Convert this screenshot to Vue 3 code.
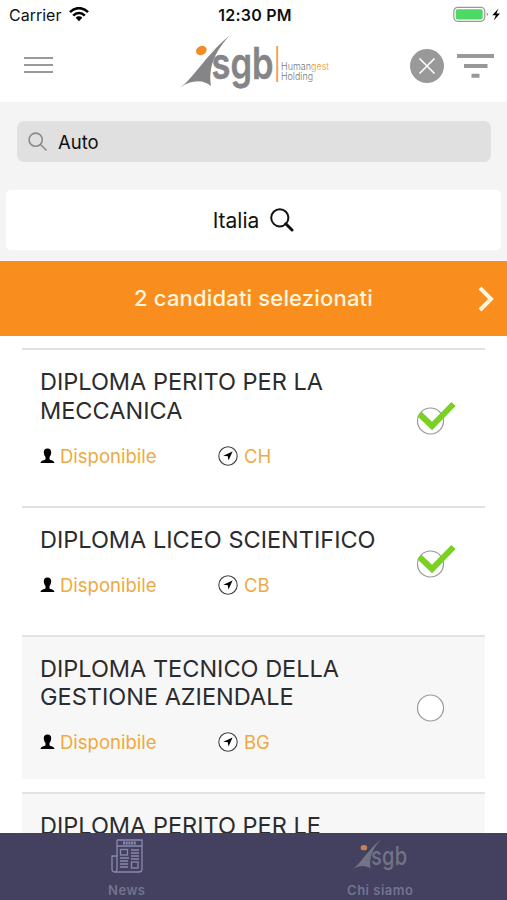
<script setup>
const candidates = [
  { lines: ['DIPLOMA PERITO PER LA', 'MECCANICA'], place: 'CH', selected: true },
  { lines: ['DIPLOMA LICEO SCIENTIFICO'], place: 'CB', selected: true },
  { lines: ['DIPLOMA TECNICO DELLA', 'GESTIONE AZIENDALE'], place: 'BG', selected: false },
  { lines: ['DIPLOMA PERITO PER LE'], place: '', selected: false },
]
</script>

<template>
  <div class="screen">
    <div class="status">
      <div class="carrier">
        <span>Carrier</span>
        <svg width="20" height="15" viewBox="0 0 20 15">
          <g fill="none" stroke="#000" stroke-width="2.6">
            <path d="M1 5.2C6-.2 14-.2 19 5.2" />
            <path d="M4.2 8.6C7.600 5.200 12.400 5.200 15.800 8.600" />
          </g>
          <path d="M6.700 10.700C8.500 8.900 11.500 8.900 13.300 10.700L10 14.200Z" fill="#000" />
        </svg>
      </div>
      <span class="time">12:30 PM</span>
      <svg class="battery" width="48" height="17" viewBox="0 0 48 17">
        <rect x=".8" y="1.300" width="31" height="14" rx="4" fill="#fff" stroke="#999" stroke-width="1.200" />
        <rect x="2.700" y="3.200" width="27" height="10.300" rx="2" fill="#4cd964" />
        <path d="M33.800 6.300q2.400 2 0 4z" fill="#888" />
        <path d="M45.500 2.500L39.300 9.300H42.800L40.800 14.500L47 7.500H43.400Z" fill="#000" />
      </svg>
    </div>

    <header class="header">
      <svg class="menu" width="30" height="18" viewBox="0 0 30 18" stroke="#999" stroke-width="2">
        <path d="M0 2H29M0 9H29M0 16H29" />
      </svg>
      <svg class="logo" width="152" height="56" viewBox="0 0 152 56">
        <path d="M0 51.500C14 42 25 20 49 0C37 14 28 28 31 50C23 43 11 44 0 51.500Z" fill="#858587" />
        <ellipse cx="21.300" cy="14.500" rx="5.500" ry="4.500" transform="rotate(-25 21.300 14.500)" fill="#f28c28" />
        <text x="31.500" y="43" font-size="44" font-weight="600" fill="#858587" stroke="#858587" stroke-width=".5" textLength="62" lengthAdjust="spacingAndGlyphs">sgb</text>
        <path d="M97.200 10V46" stroke="#f4a45a" stroke-width="2" />
        <text x="101" y="33.500" font-size="10.500" font-weight="300" fill="#777" textLength="48" lengthAdjust="spacingAndGlyphs">Human<tspan fill="#f5963c">gest</tspan></text>
        <text x="101" y="43.500" font-size="10.500" font-weight="300" fill="#777" textLength="32" lengthAdjust="spacingAndGlyphs">Holding</text>
      </svg>
      <div class="actions">
        <svg width="34" height="34" viewBox="0 0 34 34">
          <circle cx="17" cy="17" r="17" fill="#999" />
          <path d="M9.500 9.500L24.500 24.500M24.500 9.500L9.500 24.500" stroke="#fff" stroke-width="1.600" />
        </svg>
        <svg width="37" height="26" viewBox="0 0 37 26" stroke="#999" stroke-width="4">
          <path d="M0 3H37M7 13H30.500M14.500 22.800H22.500" />
        </svg>
      </div>
    </header>

    <section class="filters">
      <div class="search">
        <svg width="20" height="20" viewBox="0 0 20 20" fill="none" stroke="#8b8b8b" stroke-width="1.600">
          <circle cx="7.700" cy="7.700" r="6.600" />
          <path d="M12.500 12.500L18.500 18.500" />
        </svg>
        <span>Auto</span>
      </div>
      <div class="region">
        <span>Italia</span>
        <svg width="24" height="24" viewBox="0 0 24 24" fill="none" stroke="#111">
          <circle cx="9.800" cy="9.800" r="8.600" stroke-width="2" />
          <path d="M15.800 15.800L22 22" stroke-width="3" stroke-linecap="round" />
        </svg>
      </div>
    </section>

    <div class="banner">
      <span>2 candidati selezionati</span>
      <svg class="chevron" width="18" height="28" viewBox="0 0 18 28">
        <path d="M3 3L14 14L3 25" fill="none" stroke="#fff6df" stroke-width="4" />
      </svg>
    </div>

    <main class="list">
      <article v-for="c in candidates" :key="c.lines[0]" class="card" :class="{ idle: !c.selected }">
        <div class="info">
          <h2><span v-for="l in c.lines" :key="l">{{ l }}</span></h2>
          <div v-if="c.place" class="meta">
            <div class="availability">
              <svg width="15" height="16" viewBox="0 0 15 16">
                <path d="M7.500.5C10.300.5 11.400 2.200 11.200 4.500C11 7 10.300 8 9.500 9V11.200C10.500 12.400 14.300 12.200 14.500 15H.5C.7 12.200 4.500 12.400 5.500 11.200V9C4.700 8 4 7 3.800 4.500C3.600 2.200 4.700.5 7.500.5Z" />
              </svg>
              <span>Disponibile</span>
            </div>
            <div class="place">
              <svg width="20" height="20" viewBox="0 0 20 20">
                <circle cx="10" cy="10" r="9.200" fill="#fff" stroke="#444" stroke-width="1.100" />
                <path d="M14.600 5.500L10.500 14.500L9.800 10.200L5.300 9.700Z" />
              </svg>
              <span>{{ c.place }}</span>
            </div>
          </div>
        </div>
        <svg v-if="c.place" class="check" width="42" height="60" viewBox="0 0 42 60">
          <circle cx="14.500" cy="30" r="13" fill="#fff" stroke="#999" stroke-width="1.200" />
          <path v-if="c.selected" d="M3.500 23L16 35L37.500 13" fill="none" stroke="#7bd123" stroke-width="6" />
        </svg>
      </article>
    </main>

    <nav class="tabs">
      <div class="tab">
        <svg width="32" height="34" viewBox="0 0 32 34" fill="none" stroke="#8a89ad" stroke-width="1.300">
          <path d="M6 1H31V30Q31 33 28 33H4Q1 33 1 30V17H6V29Q6 33 3.500 33" />
          <path d="M6 1V17M6 7H31M9 19H18M9 22H17M9 25H17M9 28H17M20 11H28M20 14H28M20 17H28M20 20H28" />
          <path d="M12 4H25" stroke-width="3" stroke-dasharray="2 .7" />
          <rect x="9.500" y="10.500" width="7" height="5.500" />
          <rect x="20.500" y="23" width="6.500" height="6" />
        </svg>
        <span>News</span>
      </div>
      <div class="tab">
        <svg width="56" height="34" viewBox="0 0 94 57">
          <path d="M0 51.500C14 42 25 20 49 0C37 14 28 28 31 50C23 43 11 44 0 51.500Z" fill="#737386" />
          <ellipse cx="20" cy="14.500" rx="5.500" ry="4.500" fill="#c08455" />
          <text x="32" y="43" font-size="43" font-weight="500" fill="#737386" textLength="61" lengthAdjust="spacingAndGlyphs">sgb</text>
        </svg>
        <span>Chi siamo</span>
      </div>
    </nav>
  </div>
</template>

<style>
body { margin: 0; background: #fff; }
</style>

<style scoped>
.screen {
  display: flex;
  flex-direction: column;
  height: 900px;
  overflow: hidden;
  background: #fff;
  color: #111;
  font-family: Inter, "Liberation Sans", sans-serif;
}
svg { display: block; flex: none; }
.status {
  display: grid;
  grid-template-columns: 1fr auto 1fr;
  align-items: center;
  height: 29px;
  padding: 0 6px 0 9px;
  font-size: 16px;
}
.carrier { display: flex; align-items: center; gap: 8px; }
.time { font-weight: 600; font-size: 16px; letter-spacing: .25px; }
.battery { justify-self: end; }
.header {
  display: grid;
  grid-template-columns: 156px 152px 1fr;
  align-items: center;
  height: 73px;
  padding: 0 13px 0 24px;
}
.menu { margin-top: -2px; }
.logo { margin-top: -4px; }
.actions { display: flex; align-items: center; justify-content: flex-end; gap: 13px; }
.filters {
  display: flex;
  flex-direction: column;
  gap: 28px;
  flex: none;
  height: 140px;
  padding: 19px 6px 0;
  background: #f4f4f4;
}
.search {
  display: flex;
  align-items: center;
  gap: 10px;
  height: 41px;
  margin: 0 10px 0 11px;
  padding-left: 11px;
  box-sizing: border-box;
  border-radius: 7px;
  background: #e0e0e0;
  font-size: 18.500px;
}
.search span { padding-top: 1px; }
.region {
  display: flex;
  align-items: center;
  justify-content: center;
  gap: 11px;
  height: 60px;
  border-radius: 5px;
  background: #fff;
  font-size: 21px;
}
.region span { padding-top: 1px; }
.banner {
  display: grid;
  grid-template-columns: 1fr auto 1fr;
  align-items: center;
  flex: none;
  height: 75px;
  background: #f98e1e;
  color: #fff6df;
  font-size: 22px;
  font-weight: 500;
  letter-spacing: .17px;
}
.banner span { grid-column: 2; padding-bottom: 2px; }
.chevron { justify-self: end; margin-right: 12px; }
.list {
  flex: 1;
  min-height: 0;
  overflow: hidden;
  padding: 12px 22px 0;
}
.card {
  display: flex;
  align-items: center;
  justify-content: space-between;
  box-sizing: border-box;
  margin-bottom: 13.500px;
  padding: 18px 27px 24.500px 18px;
  border-top: 2px solid #e2e2e2;
}
.card.idle { background: #f7f7f7; }
h2 {
  margin: 0 0 18.500px;
  color: #2c2c2e;
  font-size: 23.500px;
  font-weight: 400;
  line-height: 28.600px;
}
h2 span { display: block; white-space: nowrap; }
.meta { display: flex; height: 24px; color: #efa93f; font-size: 18.500px; line-height: 24px; }
.availability, .place { display: flex; align-items: center; gap: 5px; }
.availability { width: 178px; }
.place { gap: 6px; }
.check { margin-top: 6px; }
.tabs { display: flex; flex: none; height: 67px; background: #43415f; }
.tab {
  display: flex;
  flex: 1;
  flex-direction: column;
  align-items: center;
  gap: 8px;
  padding-top: 6px;
  color: #74738f;
  font-size: 13px;
  font-weight: 600;
  letter-spacing: .5px;
  line-height: 18px;
}
</style>
